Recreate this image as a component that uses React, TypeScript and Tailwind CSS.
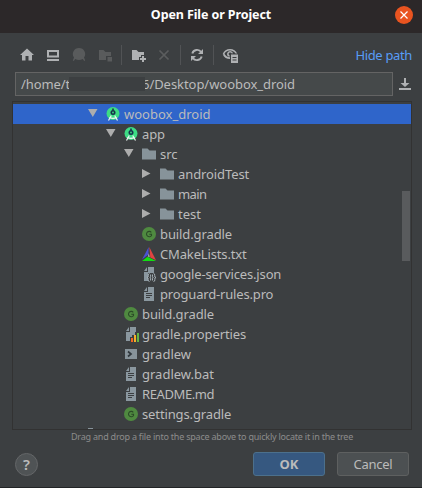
import React from "react";

type IconName =
  | "android" | "folder" | "gradle" | "cmake" | "json" | "text" | "properties" | "shell";

type Row = { name: string; icon: IconName; indent: string; arrow?: "open" | "closed"; tracking: string; selected?: boolean };

const rows: Row[] = [
  { name: "woobox_droid", icon: "android", indent: "pl-[74px]", arrow: "open", tracking: "tracking-[0px]", selected: true },
  { name: "app", icon: "android", indent: "pl-[92px]", arrow: "open", tracking: "tracking-[-0.1px]" },
  { name: "src", icon: "folder", indent: "pl-[110px]", arrow: "open", tracking: "tracking-[-0.1px]" },
  { name: "androidTest", icon: "folder", indent: "pl-[128px]", arrow: "closed", tracking: "tracking-[-0.1px]" },
  { name: "main", icon: "folder", indent: "pl-[128px]", arrow: "closed", tracking: "tracking-[-0.6px]" },
  { name: "test", icon: "folder", indent: "pl-[128px]", arrow: "closed", tracking: "tracking-[0px]" },
  { name: "build.gradle", icon: "gradle", indent: "pl-[110px]", tracking: "tracking-[-0.1px]" },
  { name: "CMakeLists.txt", icon: "cmake", indent: "pl-[110px]", tracking: "tracking-[-0.15px]" },
  { name: "google-services.json", icon: "json", indent: "pl-[110px]", tracking: "tracking-[-0.15px]" },
  { name: "proguard-rules.pro", icon: "text", indent: "pl-[110px]", tracking: "tracking-[-0.17px]" },
  { name: "build.gradle", icon: "gradle", indent: "pl-[92px]", tracking: "tracking-[-0.1px]" },
  { name: "gradle.properties", icon: "properties", indent: "pl-[92px]", tracking: "tracking-[-0.1px]" },
  { name: "gradlew", icon: "shell", indent: "pl-[92px]", tracking: "tracking-[0px]" },
  { name: "gradlew.bat", icon: "text", indent: "pl-[92px]", tracking: "tracking-[0px]" },
  { name: "README.md", icon: "text", indent: "pl-[92px]", tracking: "tracking-[-0.4px]" },
  { name: "settings.gradle", icon: "gradle", indent: "pl-[92px]", tracking: "tracking-[-0.12px]" },
];

function Svg({ children }: { children: React.ReactNode }) {
  return (
    <svg className="block size-4 shrink-0" viewBox="0 0 16 16" fill="none">
      {children}
    </svg>
  );
}

const page = <path fill="#8a979f" d="M7 1h6v14H3V6h4z M6 1v4H3z" />;

function FileIcon({ name }: { name: IconName }) {
  switch (name) {
    case "android":
      return (
        <Svg>
          <circle cx="8" cy="7.5" r="6.500" fill="#3ddc84" />
          <path d="M7.200 2.500h1.600v2H7.200z" fill="#17324a" />
          <circle cx="8" cy="6.500" r="2.500" fill="#17324a" />
          <circle cx="8" cy="6.500" r="0.900" fill="#3ddc84" />
          <path d="M6.300 9.500 3.500 14.500M9.700 9.500l2.800 5" stroke="#eef5f2" strokeWidth="1.200" />
          <path d="M4.500 11.500c2.500 1.200 4.500 1.200 7 0" stroke="#eef5f2" strokeWidth="1.200" />
        </Svg>
      );
    case "folder":
      return <Svg><path fill="#87939a" d="M1 2.500h5.500L8.500 4.500H15v9H1z" /></Svg>;
    case "gradle":
      return (
        <Svg>
          <circle cx="8" cy="8" r="7" fill="#4f8a40" />
          <path d="M10.300 6.300A2.700 2.700 0 1 0 10.500 9.500V8.300H8.300" stroke="#2b4a27" strokeWidth="1.100" />
        </Svg>
      );
    case "cmake":
      return (
        <Svg>
          <path fill="#4a51d4" d="M7.700 1 1 13.500 7.400 8.600z" />
          <path fill="#e04440" d="M8.300 1 15 14.300 9.300 11.600z" />
          <path fill="#12df12" d="M1 15h14L6.500 10.800z" />
          <path fill="#a8acb4" d="m7.800 7.300 1 4-2-.9z" />
        </Svg>
      );
    case "json":
      return (
        <Svg>
          {page}
          <path fill="#3c3f41" d="M7 7h8v9H7z" />
          <path d="M8.500 7.500Q7 7.500 7.300 9.500T6 11.500q1.500 0 1.200 2t1.300 2M12.500 7.500q1.500 0 1.200 2t1.300 2q-1.500 0-1.200 2t-1.300 2M9.600 8.500v2.200q0 .8-.8.800.8 0 .8.800v2.200M11.500 8.500v2.200q0 .8.800.8-.8 0-.8.800v2.200" stroke="#a5b0b6" strokeWidth="1" />
        </Svg>
      );
    case "text":
      return <Svg>{page}<path fill="#3c3f41" d="M5 7h6v1H5zM5 9h6v1H5zM5 11h4v1H5z" /></Svg>;
    case "properties":
      return (
        <Svg>
          {page}
          <path fill="#3c3f41" d="M7 11h2V9h3V6h4v10H7z" />
          <path fill="#f26522" d="M8 12h2v4H8z" />
          <path fill="#f4b02a" d="M11 9h2v7h-2z" />
          <path fill="#62b543" d="M14 7h2v9h-2z" />
        </Svg>
      );
    case "shell":
      return (
        <Svg>
          <path fill="#87939a" d="M2 3h12v10H2z" />
          <path d="m5 5.500 3 2.500-3 2.500" stroke="#30373c" strokeWidth="1.700" />
        </Svg>
      );
  }
}

function Arrow({ state }: { state?: "open" | "closed" }) {
  return (
    <svg className="block h-4 w-[18px] shrink-0" viewBox="0 0 18 16" fill="#adadad">
      {state === "open" && <path d="M1 3h9.500L5.800 11z" />}
      {state === "closed" && <path d="M1 3 9.500 7.500 1 12z" />}
    </svg>
  );
}

function TreeRow({ row }: { row: Row }) {
  return (
    <div className={`flex h-5 shrink-0 items-center ${row.indent} ${row.selected ? "bg-[#2f65ca]" : ""}`}>
      <Arrow state={row.arrow} />
      <FileIcon name={row.icon} />
      <span className={`ml-[3px] whitespace-nowrap text-[13px] leading-5 ${row.tracking}`}>{row.name}</span>
    </div>
  );
}

function Separator() {
  return <div className="h-5 w-px bg-[#515355]" />;
}

function Toolbar() {
  return (
    <div className="flex h-[39px] items-center pl-[19px] pr-[10px] pt-[5px]">
      <div className="flex gap-[10px]">
        <Svg><path fill="#afb1b3" d="m8 1.500 7 6.500h-2v5.500H9.500V9h-3v4.500H3V8H1z" /></Svg>
        <Svg><path fill="#afb1b3" d="M2 3h12v7.500H2zM4 5v3.500h8V5zM2 12h12v2H2z" fillRule="evenodd" /></Svg>
        <Svg><path fill="#595b5c" d="M8 1a6 6 0 0 1 5 9.500l1.200 3-1 .5-1.400-2q-3.800 2-7.600 0l-1.400 2-1-.5 1.200-3A6 6 0 0 1 8 1z" /></Svg>
        <Svg><path fill="#595b5c" d="M2 3h4.500l2 2H14v4H9v4H2zM10.500 10H15v4.500h-4.500z" /></Svg>
      </div>
      <div className="ml-[8px]"><Separator /></div>
      <div className="ml-[8px] flex gap-[10px]">
        <Svg><path fill="#afb1b3" d="M2 3h4.500l2 2H14v3h-3v2H9v3H2zM12 9h2v2h2v2h-2v2h-2v-2h-2v-2h2z" /></Svg>
        <Svg><path d="m3.500 3.500 9 9m0-9-9 9" stroke="#5b5d5e" strokeWidth="1.700" /></Svg>
      </div>
      <div className="ml-[8px]"><Separator /></div>
      <div className="ml-[8px]">
        <Svg>
          <path d="M3.300 6.500A5 5 0 0 1 12.200 5M12.700 9.500A5 5 0 0 1 3.800 11" stroke="#afb1b3" strokeWidth="1.900" />
          <path fill="#afb1b3" d="M14 2v5H9zM2 14V9h5z" />
        </Svg>
      </div>
      <div className="ml-[8px]"><Separator /></div>
      <div className="ml-[8px]">
        <Svg>
          <path d="M1.500 7C4 1.300 12 1.300 14.500 7M1.500 7Q3.500 11 8 11.200" stroke="#afb1b3" strokeWidth="1.700" />
          <path d="M10.400 6.600A2.300 2.300 0 1 0 7.500 9.200" stroke="#afb1b3" strokeWidth="1.500" />
          <path fill="#3c3f41" d="M8 6.500h8V16H8z" />
          <path fill="#afb1b3" fillRule="evenodd" d="M9 7.500h7V16H9zM10.500 10v1h4v-1zm0 2.500v1h4v-1z" />
        </Svg>
      </div>
      <span className="ml-auto text-[13px] leading-5 text-[#589df6] tracking-[-0.35px]">Hide path</span>
    </div>
  );
}

export default function App() {
  return (
    <div className="flex h-[488px] w-[422px] flex-col overflow-hidden border-b border-[#222426] bg-[#3c3f41] font-['Noto_Sans','Open_Sans',sans-serif] text-[#bbbbbb]">
      <header className="grid h-[33px] shrink-0 grid-cols-[1fr_auto_1fr] items-center bg-[#2c2829] pr-[9px] pl-[9px]">
        <span />
        <h1 className="text-[12.5px] font-bold leading-5 text-white pb-[3px] tracking-[-0.1px]">Open File or Project</h1>
        <button className="flex size-[18px] items-center justify-center justify-self-end rounded-full bg-[#e95420] mb-[3px]">
          <svg className="size-2" viewBox="0 0 8 8"><path d="m.5.5 7 7m0-7-7 7" stroke="#fff" strokeWidth="1.200" /></svg>
        </button>
      </header>
      <Toolbar />
      <div className="flex shrink-0 items-center pl-[15px]">
        <div className="flex h-6 w-[378px] items-center border border-[#646464] bg-[#45494a] px-[5px] text-[13px] leading-5">
          <span className="w-[48px] shrink-0 tracking-[-0.1px]">/home/t</span>
          <span className="relative z-10 mb-[1px] h-[14px] w-[76px] shrink-0 bg-[#3c3f41]" />
          <span className="-ml-[3px] tracking-[-0.05px]">6/Desktop/woobox_droid</span>
        </div>
        <svg className="ml-1 size-4" viewBox="0 0 16 16" fill="#afb1b3"><path d="M7 2h2v5h3.500L8 11 3.500 7H7zM2 12h12v2H2z" /></svg>
      </div>
      <div className="mt-[5px] ml-3 flex h-[329px] w-[400px] shrink-0 overflow-hidden border border-[#323232]">
        <div className="relative flex w-full flex-col pt-[2px]">
          {rows.map((row, i) => <TreeRow key={i} row={row} />)}
          <div className="mt-[4px] ml-[75px] h-px w-[5px] shrink-0 bg-[#87939a]" />
          <div className="absolute top-[89px] right-[1px] h-[70px] w-2 bg-[#595b5d]" />
        </div>
      </div>
      <p className="h-[13px] shrink-0 whitespace-nowrap pl-[71px] text-[9px] leading-[13px] text-[#8c8c8c] tracking-[-0.215px]">
        Drag and drop a file into the space above to quickly locate it in the tree
      </p>
      <footer className="mt-[9px] flex h-6 items-center pl-[15px] pr-[13px]">
        <button className="flex size-[23px] items-center justify-center rounded-full border border-[#646668] bg-[#4f5355] text-[15px] font-semibold leading-none">?</button>
        <button className="ml-auto h-6 w-[72px] rounded-[3px] border border-[#4c708c] bg-[#365880] text-[13px] leading-5 font-bold">OK</button>
        <button className="ml-3 h-6 w-[72px] rounded-[3px] border border-[#5e6060] bg-[#4c5052] text-[13px] leading-5 tracking-[-0.25px]">Cancel</button>
      </footer>
    </div>
  );
}
